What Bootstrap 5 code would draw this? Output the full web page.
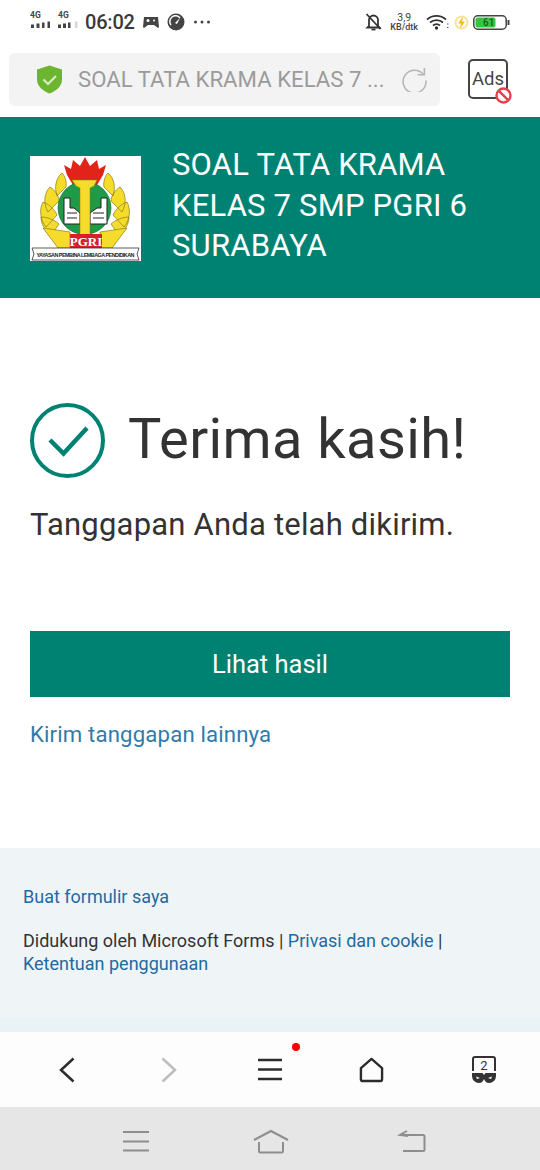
<!DOCTYPE html>
<html lang="id">
<head>
<meta charset="utf-8">
<title>Terima kasih</title>
<link rel="stylesheet" href="https://cdn.jsdelivr.net/npm/bootstrap@5.3.0/dist/css/bootstrap.min.css">
<style>
html,body{width:540px;height:1170px;overflow:hidden;margin:0;background:#fff;font-family:Roboto,"Liberation Sans",sans-serif;}
.page-col{width:540px;height:1170px;}
.status-row{height:44px;padding:0 30px;color:#3a3a3a;}
.status-time{font-size:20px;font-weight:500;line-height:1;letter-spacing:-.2px;margin-left:2px;}
.net-kb{font-size:9px;line-height:9px;font-weight:500;text-align:center;color:#444;}
.net-kb b{display:block;font-size:10.5px;font-weight:400;line-height:10px;}
.addr-row{height:73px;padding:9px 0 11px 9px;}
.addr-box{width:431px;height:53px;background:#f3f3f3;border-radius:6px;padding:0 13px 0 27px;}
.addr-text{font-size:22.2px;color:#9b9b9b;line-height:1;white-space:nowrap;margin-left:15px;}
.ads-wrap{position:relative;margin-left:28px;width:40px;height:40px;margin-top:6px;border:2px solid #444;border-radius:5px;font-size:18.5px;color:#444;line-height:36px;text-align:center;}
.ads-wrap svg{position:absolute;right:-6px;bottom:-7px;}
.form-head{height:181px;background:#008272;padding:39px 30px 0;color:#fff;}
.head-title{font-size:31px;line-height:40.5px;margin:-11px 0 0 31px;width:320px;letter-spacing:.2px;}
.main-area{height:550px;padding:0 30px;}
.thanks-row{padding-top:104px;height:181px;}
.thanks-big{font-size:56px;line-height:70px;color:#333;margin:-3px 0 0 23px;letter-spacing:.4px;}
.sent-line{font-size:31px;line-height:40px;color:#333;margin:26px 0 0;letter-spacing:.2px;}
.result-btn{width:480px;height:66px;background:#008272;border:0;border-radius:0;color:#fff;font-size:25.5px;margin-top:86px;}
.result-btn:hover{background:#008272;color:#fff;}
.again-link{display:block;font-size:22.2px;line-height:30px;color:#2f7bab;text-decoration:none;margin-top:22px;letter-spacing:.15px;}
.foot-area{height:170px;background:#eff5f7;padding:37px 23px 0;font-size:18px;line-height:23px;color:#333;}
.foot-area a{color:#1f6aa0;text-decoration:none;}
.foot-legal{margin-top:21px;}
.foot-gap{height:14px;background:#e9f2f5;}
.tool-row{height:75px;background:#fdfdfd;padding-left:58px;position:relative;display:grid;grid-template-columns:102px 98px 101px 112px 26px;align-items:center;}
.tool-dot{position:absolute;left:292px;top:11px;width:8px;height:8px;border-radius:50%;background:#f00;}
.sys-row{height:63px;background:#e6e6e6;}
</style>
</head>
<body>
<div class="page-col d-flex flex-column">

  <div class="status-row d-flex align-items-center justify-content-between">
    <div class="d-flex align-items-center gap-1">
      <svg width="49" height="24" viewBox="0 0 49 24"><text x="0" y="8" font-size="8.500" font-weight="700" font-family="Roboto" fill="#444">4G</text><text x="28" y="8" font-size="8.500" font-weight="700" font-family="Roboto" fill="#444">4G</text><path d="M1 14.500h3V18H1zM6.500 13.500h3V18h-3zM12 12.500h2.500V18H12zM17.500 11.500h2.500V18h-2.500z" fill="#444"/><path d="M28 14.500h3V18h-3zM33 13.500h3V18h-3zM38 12.500h2.500V18H38z" fill="#444"/><path d="M45 11.500h2.500V18H45z" fill="#d5d5d5"/></svg>
      <span class="status-time">06:02</span>
      <svg class="ms-1" width="16" height="12" viewBox="0 0 16 12"><path d="M1 1h14l1 10-1 1-4-3H5l-4 3-1-1z" fill="#444"/><circle cx="5" cy="4.500" r="1.500" fill="#fff"/><circle cx="11" cy="4.500" r="1" fill="#fff"/></svg>
      <svg class="ms-1" width="18" height="18" viewBox="0 0 18 18"><circle cx="9" cy="9" r="8.500" fill="#444"/><path d="M4 12a5.500 5.500 0 0 1 9-7" fill="none" stroke="#fff" stroke-width="1.500"/><path d="M8 10l5-5-3 6z" fill="#fff"/></svg>
      <svg class="ms-1" width="18" height="4" viewBox="0 0 18 4"><circle cx="2.500" cy="2" r="1.500" fill="#444"/><circle cx="9" cy="2" r="1.500" fill="#444"/><circle cx="15.500" cy="2" r="1.500" fill="#444"/></svg>
    </div>
    <div class="d-flex align-items-center">
      <svg width="17" height="18" viewBox="0 0 17 18"><path d="M4 13V7a4.500 4.500 0 0 1 9 0v6l1.500 1.500h-12z" fill="none" stroke="#333" stroke-width="1.800"/><path d="M6.500 16.500h4" stroke="#333" stroke-width="1.800"/><path d="M1.500 1l14 15" stroke="#333" stroke-width="1.800"/></svg>
      <div class="net-kb ms-2"><b>3,9</b>KB/dtk</div>
      <svg class="ms-2" width="24" height="16" viewBox="0 0 24 16"><path d="M1 5.500a14 14 0 0 1 19 0M4 8.500a10 10 0 0 1 13 0M7 11.500a5.500 5.500 0 0 1 7 0" fill="none" stroke="#333" stroke-width="1.800"/><circle cx="10.500" cy="14" r="1.700" fill="#333"/><path d="M21 10l1.500 0M21 13.500h1.500" stroke="#555"/></svg>
      <svg class="ms-1" width="15" height="15" viewBox="0 0 15 15"><circle cx="7.500" cy="7.500" r="6" fill="none" stroke="#f8e39a" stroke-width="2"/><path d="M9 1.500L4 8.500h3l-1 5 5-7H8z" fill="#f2bc1a"/></svg>
      <svg class="ms-1" width="37" height="15" viewBox="0 0 37 15"><rect x=".8" y=".8" width="32.400" height="13.400" rx="4" fill="#fff" stroke="#444" stroke-width="1.500"/><rect x="2.500" y="2.500" width="20" height="10" rx="2" fill="#35c63f"/><rect x="34.500" y="5" width="2" height="5" fill="#444"/><text x="10" y="11" font-size="10" font-weight="500" font-family="Roboto" fill="#1d5a24">61</text></svg>
    </div>
  </div>

  <div class="addr-row d-flex align-items-start">
    <div class="addr-box d-flex align-items-center">
      <svg width="27" height="29" viewBox="0 0 27 29" class="flex-shrink-0"><path d="M13.500 0.500L26 4.500v10c0 7-6 11.500-12.500 14C7 26 1 21.500 1 14.500v-10z" fill="#6db52e"/><path d="M7.500 14.500l4.500 4.500 8-8" fill="none" stroke="#d6edc0" stroke-width="2.200"/></svg>
      <span class="addr-text">SOAL TATA KRAMA KELAS 7 ...</span>
      <svg class="ms-auto flex-shrink-0" width="25" height="25" viewBox="0 0 24 24"><path d="M20.500 7A11 11 0 1 0 23 13" fill="none" stroke="#b5b5b5" stroke-width="1.500"/><path d="M21.500 1v6.500H15" fill="none" stroke="#b5b5b5" stroke-width="1.500"/></svg>
    </div>
    <div class="ads-wrap">Ads
      <svg width="17" height="17" viewBox="0 0 17 17"><circle cx="8.500" cy="8.500" r="7" fill="#fff" stroke="#e5404c" stroke-width="2.400"/><path d="M3.800 3.800l9.400 9.400" stroke="#e5404c" stroke-width="2.400"/></svg>
    </div>
  </div>

  <div class="form-head d-flex align-items-start">
    <svg width="111" height="105" viewBox="0 0 111 105" class="flex-shrink-0">
      <rect width="111" height="105" fill="#fff"/>
      <path d="M55 1l5 9 7-6 2 9 7-4-3 10-6 10H43l-6-10-3-10 7 4 2-9 7 6z" fill="#e2231a"/>
      <g fill="#f6dc2a" stroke="#8a7a18" stroke-width=".7">
        <path d="M32 17c-6 5-8 14-5 23l9-9c1-5-1-11-4-14zM20 31c-6 6-7 16-2 25l11-11c0-5-4-11-9-14zM13 46c-4 7-3 18 3 25l11-12c-2-5-8-11-14-13zM11 61c0 7 4 14 11 17l7-10c-4-4-12-7-18-7z"/>
        <path d="M78 17c6 5 8 14 5 23l-9-9c-1-5 1-11 4-14zM90 31c6 6 7 16 2 25l-11-11c0-5 4-11 9-14zM97 46c4 7 3 18-3 25l-11-12c2-5 8-11 14-13zM99 61c0 7-4 14-11 17l-7-10c4-4 12-7 18-7z"/>
        <path d="M13 72l27 4v16H28zM97 72l-27 4v16h12z"/>
      </g>
      <circle cx="54.500" cy="52" r="26.500" fill="#1f9a48" stroke="#14602e" stroke-width=".6"/>
      <path d="M34 42h6v10h4l6 5v11H34z" fill="#fff" stroke="#222" stroke-width="1"/>
      <path d="M77 42h-6v10h-4l-7 5v11h17z" fill="#fff" stroke="#222" stroke-width="1"/>
      <path d="M37 57h10M37 62h10M63 57h11M63 62h11" stroke="#222" stroke-width="1"/>
      <path d="M42 24h25l-3 6-4 2v47H50V32l-4-2z" fill="#f6dc2a" stroke="#8a7a18" stroke-width=".5"/>
      <rect x="40" y="78" width="32" height="15" fill="#d8202a"/>
      <text x="56" y="90" font-size="13" font-weight="700" font-family="Liberation Serif" fill="#fff" text-anchor="middle">PGRI</text>
      <path d="M2 92h107l-2 6 2 6H2l2-6z" fill="#fff" stroke="#333" stroke-width=".8"/>
      <text x="55.500" y="100.500" font-size="5.400" font-weight="700" font-family="Liberation Sans" fill="#222" text-anchor="middle" textLength="98">YAYASAN PEMBINA LEMBAGA PENDIDIKAN</text>
    </svg>
    <div class="head-title">SOAL TATA KRAMA KELAS 7 SMP PGRI 6 SURABAYA</div>
  </div>

  <div class="main-area">
    <div class="thanks-row d-flex align-items-center">
      <svg width="75" height="75" viewBox="0 0 75 75" class="flex-shrink-0"><circle cx="37.500" cy="37.500" r="35.500" fill="none" stroke="#008272" stroke-width="4"/><path d="M20 37l13.500 13.500L57 25" fill="none" stroke="#008272" stroke-width="4.500"/></svg>
      <span class="thanks-big">Terima kasih!</span>
    </div>
    <p class="sent-line">Tanggapan Anda telah dikirim.</p>
    <button type="button" class="btn result-btn d-block">Lihat hasil</button>
    <a href="#" class="again-link">Kirim tanggapan lainnya</a>
  </div>

  <div class="foot-area">
    <div><a href="#">Buat formulir saya</a></div>
    <div class="foot-legal">Didukung oleh Microsoft Forms | <a href="#">Privasi dan cookie</a> | <a href="#">Ketentuan penggunaan</a></div>
  </div>
  <div class="foot-gap"></div>

  <div class="tool-row">
    <svg width="18" height="26" viewBox="0 0 18 26"><path d="M15.500 1.500L3 13l12.500 11.500" fill="none" stroke="#2c2c2c" stroke-width="2.500"/></svg>
    <svg width="18" height="26" viewBox="0 0 18 26"><path d="M2.500 1.500L15 13 2.500 24.500" fill="none" stroke="#bdbdbd" stroke-width="2.500"/></svg>
    <svg width="24" height="23" viewBox="0 0 24 23"><path d="M0 2h24M0 11.500h24M0 21h24" stroke="#2c2c2c" stroke-width="2.600"/></svg>
    <svg width="25" height="26" viewBox="0 0 26 26"><path d="M2 11L13 1.500 24 11v11.500a2 2 0 0 1-2 2H4a2 2 0 0 1-2-2z" fill="none" stroke="#2c2c2c" stroke-width="2.500" stroke-linejoin="round"/></svg>
    <svg width="26" height="28" viewBox="0 0 26 28"><path d="M2 15V3a2 2 0 0 1 2-2h18a2 2 0 0 1 2 2v12" fill="none" stroke="#333" stroke-width="2"/><text x="13" y="14" font-size="13" font-family="Roboto" fill="#333" text-anchor="middle">2</text><path d="M1 17h10.500l1.500 2 1.500-2H25v3a7 7 0 0 1-7 7c-3 0-4-2-5-4-1 2-2 4-5 4a7 7 0 0 1-7-7z" fill="#333"/><path d="M5 20.500l4 1.500-3 1zM21 20.500l-4 1.500 3 1z" fill="#fff"/></svg>
    <span class="tool-dot"></span>
  </div>

  <div class="sys-row d-flex align-items-center">
    <svg width="540" height="63" viewBox="0 0 540 63"><g transform="translate(0 3)"><path d="M123 22h26M123 31.500h26M123 40.500h26" stroke="#8e8e8e" stroke-width="2"/><path d="M254 30l17-9 17 9M259 32v9a1.500 1.500 0 0 0 1.500 1.500h21a1.500 1.500 0 0 0 1.500-1.500v-9" fill="none" stroke="#8e8e8e" stroke-width="2"/><path d="M400 25h23a1.500 1.500 0 0 1 1.500 1.500v13a1.500 1.500 0 0 1-1.500 1.500h-20M407 21l-7 4 8 1" fill="none" stroke="#8e8e8e" stroke-width="2"/></g></svg>
  </div>
</div>
<script src="https://cdn.jsdelivr.net/npm/bootstrap@5.3.0/dist/js/bootstrap.bundle.min.js"></script>
</body>
</html>
